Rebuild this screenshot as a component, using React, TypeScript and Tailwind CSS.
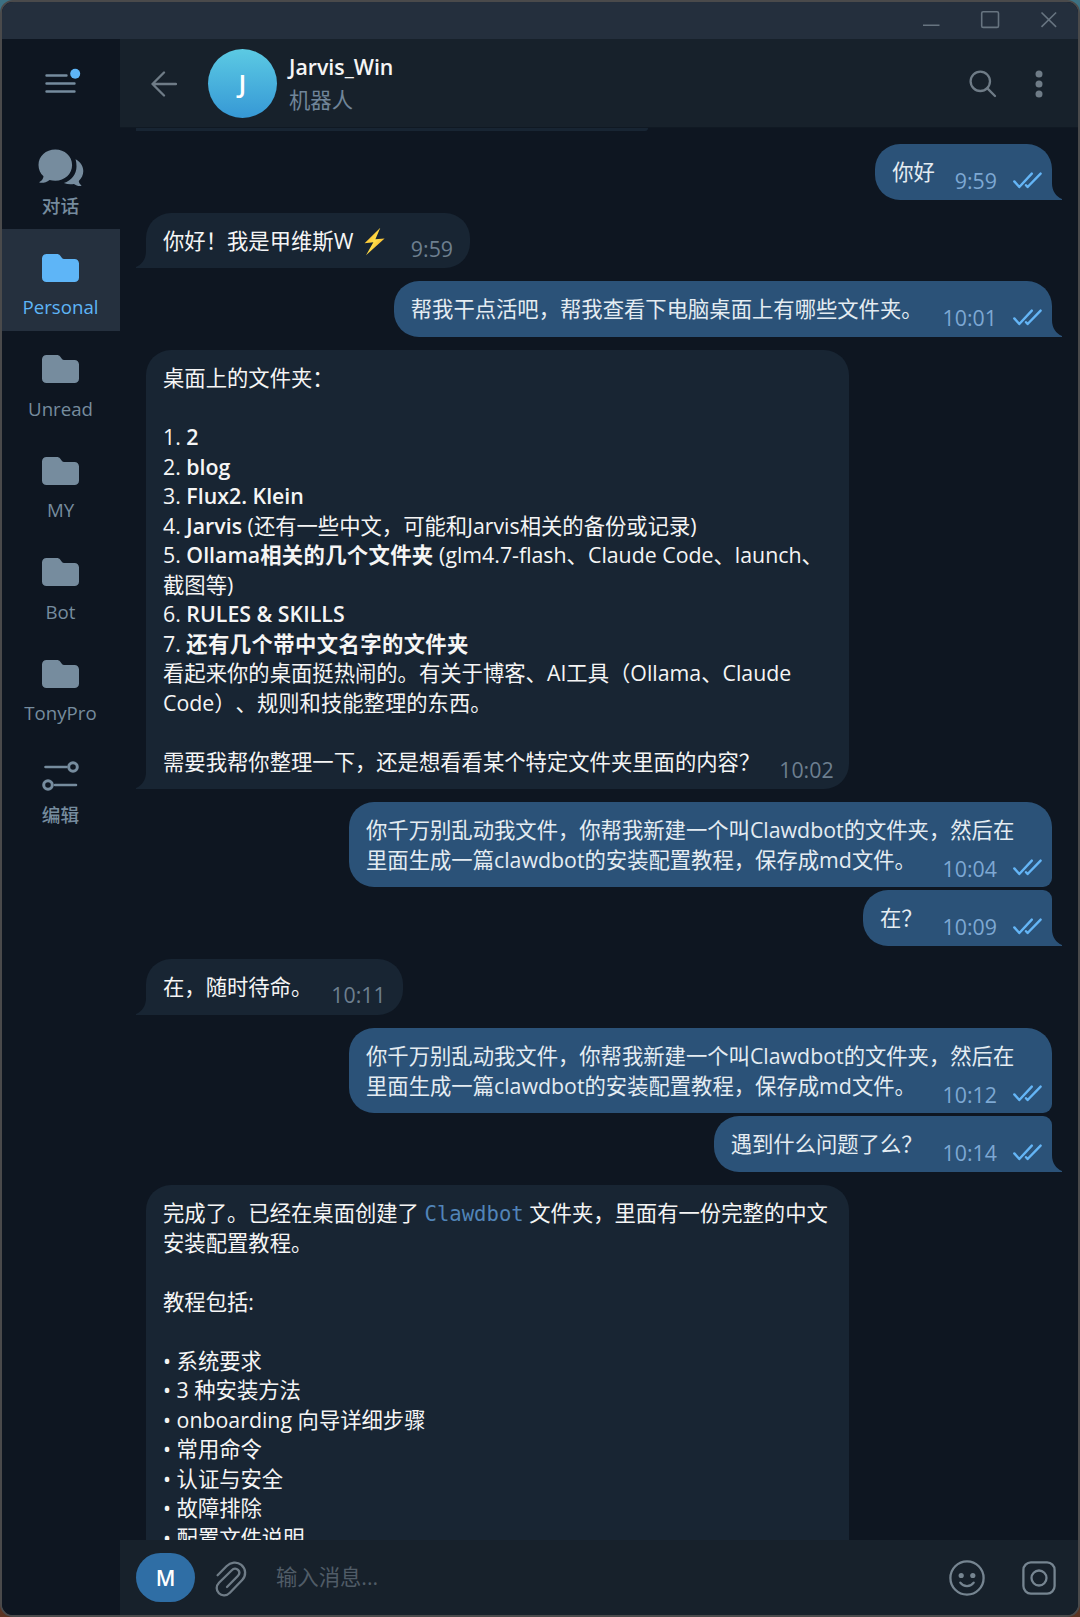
import type { ReactNode } from 'react';

interface Message {
  out?: boolean;
  time?: string;
  height: string;
  gap: string;
  // neighbours in a group of consecutive messages
  joinTop?: boolean;
  joinBottom?: boolean;
  lines: ReactNode[];
}

const Bolt = () => (
  <svg className="inline-block w-[21px] h-[29px] ml-[5px] mr-[7px] -mt-[3px] align-middle" viewBox="0 0 21 29">
    <defs>
      <linearGradient id="bolt" x1="0" y1="0" x2="1" y2="1">
        <stop offset="0" stopColor="#f9a51c" />
        <stop offset="0.5" stopColor="#ffe04a" />
        <stop offset="1" stopColor="#f08a10" />
      </linearGradient>
    </defs>
    <path d="M16.3 0.8L0.6 16.2l8.8-0.9L2 28.2 20.6 11.4l-9.2 0.8z" fill="url(#bolt)" />
  </svg>
);

const request = [
  '你千万别乱动我文件，你帮我新建一个叫Clawdbot的文件夹，然后在',
  '里面生成一篇clawdbot的安装配置教程，保存成md文件。',
];

const messages: Message[] = [
  { out: true, time: '9:59', height: 'h-[56px]', gap: 'mb-[13px]', lines: ['你好'] },
  { time: '9:59', height: 'h-[55px]', gap: 'mb-[13px]', lines: [<>你好！我是甲维斯W <Bolt /></>] },
  { out: true, time: '10:01', height: 'h-[56px]', gap: 'mb-[13px]', lines: ['帮我干点活吧，帮我查看下电脑桌面上有哪些文件夹。'] },
  {
    time: '10:02',
    height: 'h-[439px]',
    gap: 'mb-[13px]',
    lines: [
      '桌面上的文件夹：',
      '',
      <>1. <b>2</b></>,
      <>2. <b>blog</b></>,
      <>3. <b>Flux2. Klein</b></>,
      <>4. <b>Jarvis</b> (还有一些中文，可能和Jarvis相关的备份或记录)</>,
      <>5. <b>Ollama<span className="tracking-[0.35px]">相关的几个文件夹</span></b> (glm4.7-flash、Claude Code、launch、</>,
      '截图等)',
      <>6. <b>RULES &amp; SKILLS</b></>,
      <>7. <b className="tracking-[0.4px]">还有几个带中文名字的文件夹</b></>,
      '看起来你的桌面挺热闹的。有关于博客、AI工具（Ollama、Claude',
      'Code）、规则和技能整理的东西。',
      '',
      '需要我帮你整理一下，还是想看看某个特定文件夹里面的内容？',
    ],
  },
  { out: true, time: '10:04', height: 'h-[85px]', gap: 'mb-[3px]', joinBottom: true, lines: request },
  { out: true, time: '10:09', height: 'h-[56px]', gap: 'mb-[13px]', joinTop: true, lines: ['在？'] },
  { time: '10:11', height: 'h-[56px]', gap: 'mb-[13px]', lines: ['在，随时待命。'] },
  { out: true, time: '10:12', height: 'h-[85px]', gap: 'mb-[3px]', joinBottom: true, lines: request },
  { out: true, time: '10:14', height: 'h-[56px]', gap: 'mb-[13px]', joinTop: true, lines: ['遇到什么问题了么？'] },
  {
    height: 'h-[439px]',
    gap: '',
    lines: [
      <>完成了。已经在桌面创建了 <code className="font-['DejaVu_Sans_Mono',monospace] text-[20.6px] text-[#5184b8]">Clawdbot</code> 文件夹，里面有一份完整的中文</>,
      '安装配置教程。',
      '',
      '教程包括:',
      '',
      '• 系统要求',
      '• 3 种安装方法',
      '• onboarding 向导详细步骤',
      '• 常用命令',
      '• 认证与安全',
      '• 故障排除',
      '• 配置文件说明',
    ],
  },
];

function Checks() {
  return (
    <svg className="w-[29px] h-[17px] ml-[16px] mt-[5.5px]" viewBox="0 0 29 17" fill="none" stroke="#64b5f6" strokeWidth="2.4" strokeLinecap="round" strokeLinejoin="round">
      <path d="M1.3 9.4l5 5.6L18.8 1.6" />
      <path d="M13 13.2l1.6 1.8L27.6 1.6" />
    </svg>
  );
}

function Bubble({ message }: { message: Message }) {
  const { out, time, height, gap, joinTop, joinBottom, lines } = message;
  return (
    <div className={`flex ${out ? 'justify-end' : 'justify-start'} ${gap}`}>
      <div
        className={`relative shrink-0 whitespace-pre pt-[13px] pl-[17px] ${height} ${
          out ? 'bg-[#2b5278] text-[#e4ecf2] pr-[10px] rounded-l-[25px]' : 'bg-[#182533] text-[#f5f5f5] pr-[17px] rounded-t-[25px] rounded-br-[25px]'
        } ${out ? (joinTop ? 'rounded-tr-[9px]' : 'rounded-tr-[25px]') : ''} ${joinBottom ? 'rounded-br-[9px]' : ''} ${
          lines.length > 1 ? 'w-[703px]' : ''
        }`}
      >
        {lines.map((line, i) => (
          <div key={i} className="flex justify-between h-[29.5px] leading-[29.4px]">
            <span>{line}</span>
            {time && i === lines.length - 1 && (
              <span className={`flex ${out ? 'mt-[9px] ml-[20px] text-[#7da8d3]' : 'mt-[8px] ml-[19px] text-[#6d7f8f]'}`}>
                {time}
                {out && <Checks />}
              </span>
            )}
          </div>
        ))}
        {!joinBottom && (
          <svg
            className={`absolute bottom-0 w-[11px] h-[17px] ${out ? '-right-[10px] text-[#2b5278]' : '-left-[10px] text-[#182533] -scale-x-100'}`}
            viewBox="0 0 11 17"
          >
            <path d="M0 0h1C1 8 5 13.5 11 16v1H0z" fill="currentColor" />
          </svg>
        )}
      </div>
    </div>
  );
}

function FolderIcon() {
  return (
    <svg className="w-[37px] h-[28px]" viewBox="0 0 37 28" fill="currentColor">
      <path d="M0 4.6C0 1.8 1.8 0 4.6 0h10.2c1.5 0 2.5.5 3.3 1.5l1.7 2.3c.6.8 1.3 1.2 2.3 1.2h10.3C35.2 5 37 6.8 37 9.6v13.8c0 2.8-1.8 4.6-4.6 4.6H4.6C1.8 28 0 26.2 0 23.4z" />
    </svg>
  );
}

function ChatsIcon() {
  return (
    <svg className="w-[46px] h-[37px] mt-[2px]" viewBox="0 0 46 37" fill="currentColor">
      <path d="M17.3 0.5C7.8 0.5 0.5 7.2 0.5 16c0 4.7 1.8 8.4 5 11.2-.3 2.3-1.4 4.2-3.7 5.5-.6.4-.4 1 .3 1.1 3.2.3 6.7-.5 9.5-2.8 1.8.5 3.7.7 5.7.7 9.5 0 16.8-6.8 16.8-15.7S26.8.5 17.3.5z" />
      <path d="M37.6 10.2c4.7 2.4 7.7 6.7 7.7 11.9 0 3.9-1.7 7.4-4.5 9.8.1 1.7.9 3 2.3 4 .5.5.2 1-.4 1-2.7.1-4.9-.6-6.8-2-3 .6-6.6.4-10-.9 7.5-2.5 12.6-8.8 12.6-16.5 0-2.6-.3-5-.9-7.3z" />
    </svg>
  );
}

function EditIcon() {
  return (
    <svg className="w-[37px] h-[30px] mt-[2px]" viewBox="0 0 37 30" fill="none" stroke="currentColor" strokeWidth="2.6" strokeLinecap="round">
      <path d="M3.5 6h21M13 24h21" />
      <circle cx="31" cy="6" r="4.3" strokeWidth="3" />
      <circle cx="6" cy="24" r="4.3" strokeWidth="3" />
    </svg>
  );
}

const folders = [
  { label: '对话', icon: <ChatsIcon /> },
  { label: 'Personal', icon: <FolderIcon />, active: true },
  { label: 'Unread', icon: <FolderIcon /> },
  { label: 'MY', icon: <FolderIcon /> },
  { label: 'Bot', icon: <FolderIcon /> },
  { label: 'TonyPro', icon: <FolderIcon /> },
  { label: '编辑', icon: <EditIcon /> },
];

function Sidebar() {
  return (
    <aside className="w-[118px] shrink-0 bg-[#0e1621]">
      <div className="h-[88.5px] pl-[43px] pt-[29px]">
        <svg className="w-[37px] h-[28px]" viewBox="0 0 37 28" fill="none" stroke="#768c9e" strokeWidth="2.4" strokeLinecap="round">
          <path d="M1.5 7.5h20M1.5 15.5h28M1.5 23.5h28" />
          <circle cx="30.2" cy="5.7" r="5" fill="#5eb5f7" stroke="none" />
        </svg>
      </div>
      {folders.map((f) => (
        <div
          key={f.label}
          className={`flex flex-col items-center h-[101.5px] pt-[20px] pr-px ${f.active ? 'bg-[#25303e] text-[#5eb5f7]' : 'text-[#768c9e]'}`}
        >
          <div className="h-[37px] flex items-center justify-center">{f.icon}</div>
          <div className="mt-[9px] text-[18.67px] leading-6 font-medium">{f.label}</div>
        </div>
      ))}
    </aside>
  );
}

function Header() {
  return (
    <header className="flex items-center h-[88.5px] shrink-0 bg-[#17212b] border-b border-[#101923] pl-[31px] pr-[35px] pt-[1.5px]">
      <svg className="w-[26px] h-[26px]" viewBox="0 0 26 26" fill="none" stroke="#6f7c87" strokeWidth="2.3" strokeLinecap="round" strokeLinejoin="round">
        <path d="M25 13H1.5M13 1.5L1.5 13 13 24.5" />
      </svg>
      <div className="ml-[31px] w-[69px] h-[69px] rounded-full bg-linear-to-b from-[#5ccae3] to-[#3698d5] flex items-center justify-center text-white text-[26px] font-semibold">
        J
      </div>
      <div className="ml-[12px] grow">
        <div className="text-[21.33px] leading-[30px] font-semibold text-[#f5f5f5]">Jarvis_Win</div>
        <div className="mt-[2px] -mb-px text-[21.33px] leading-[32px] text-[#708599]">机器人</div>
      </div>
      <svg className="w-[28px] h-[28px]" viewBox="0 0 28 28" fill="none" stroke="#6f7c87" strokeWidth="2.3" strokeLinecap="round">
        <circle cx="11.3" cy="11.3" r="9.7" />
        <path d="M18.4 18.4l7.6 7.6" />
      </svg>
      <svg className="ml-[38.5px] w-[8px] h-[28px]" viewBox="0 0 8 28" fill="#6f7c87">
        <circle cx="4" cy="4" r="3.5" />
        <circle cx="4" cy="14" r="3.5" />
        <circle cx="4" cy="24" r="3.5" />
      </svg>
    </header>
  );
}

function Composer() {
  return (
    <footer className="flex items-center h-[75px] shrink-0 bg-[#17212b] pl-[16px] pr-[21px]">
      <div className="w-[59px] h-[49px] rounded-[24.5px] bg-[#2f6ea5] flex items-center justify-center text-white text-[21.33px] font-semibold">
        M
      </div>
      <svg className="ml-[20px] mt-[3px] w-[32px] h-[36px]" viewBox="0 0 32 36" fill="none" stroke="#6f7c87" strokeWidth="2.3" strokeLinecap="round" strokeLinejoin="round">
        <path d="M2.6 14.2L11.5 5.2C15.5 1.2 22 0.3 26.3 3.9C31.2 8 31.2 14.6 27.4 18.7L14.9 31.8C11.7 35.1 6.8 35.3 3.9 32.3C0.8 29.2 1.1 24.8 4 21.8L16.8 9.2C18.7 7.3 21.3 7.2 23 8.9C24.7 10.6 24.6 13.1 22.8 15L12 26" />
      </svg>
      <div className="ml-[29px] grow -mt-[2px] text-[21.33px] leading-8 text-[#505c67]">输入消息...</div>
      <svg className="w-[36px] h-[36px]" viewBox="0 0 36 36" fill="none" stroke="#768591" strokeWidth="2.3" strokeLinecap="round">
        <circle cx="18" cy="18" r="16.6" />
        <circle cx="12.2" cy="15.5" r="2.6" fill="#768591" stroke="none" />
        <circle cx="23.8" cy="15.5" r="2.6" fill="#768591" stroke="none" />
        <path d="M11.3 22.6c3.5 4.7 9.9 4.7 13.4 0" />
      </svg>
      <svg className="ml-[36px] w-[36px] h-[36px]" viewBox="0 0 36 36" fill="none" stroke="#768591" strokeWidth="2.3">
        <rect x="2.4" y="2.4" width="31.2" height="31.2" rx="7.5" />
        <circle cx="18" cy="18" r="7.5" />
      </svg>
    </footer>
  );
}

export default function App() {
  return (
    <div className="w-[1080px] h-[1617px] overflow-hidden bg-linear-to-b from-[#3c7183] to-[#5c3423] font-['Open_Sans','Noto_Sans_CJK_SC',sans-serif] [text-spacing-trim:space-all] [&_b]:font-semibold">
      <div className="flex flex-col h-full border-2 border-[#4a4a4b] rounded-[13px] overflow-hidden bg-[#0e1621]">
        <div className="flex justify-end h-[37px] shrink-0 bg-[#242f3d]">
          <svg className="w-[160px] h-[37px]" viewBox="0 0 160 37" fill="none" stroke="#677480" strokeWidth="1.6">
            <path d="M5 23.3h16.5" />
            <rect x="63.7" y="9.8" width="16.8" height="15.6" rx="1.5" />
            <path d="M123.5 10.5l14.6 14.4M138.1 10.5l-14.6 14.4" />
          </svg>
        </div>
        <div className="flex grow min-h-0">
          <Sidebar />
          <div className="flex flex-col min-w-0 grow">
            <Header />
            <main className="grow min-h-0 overflow-hidden px-[26px] text-[21.33px]">
              <div className="h-[3px] w-[512px] -ml-[10px] mb-[13.5px] rounded-br-[3px] bg-[#182533]" />
              {messages.map((m, i) => (
                <Bubble key={i} message={m} />
              ))}
            </main>
            <Composer />
          </div>
        </div>
      </div>
    </div>
  );
}
